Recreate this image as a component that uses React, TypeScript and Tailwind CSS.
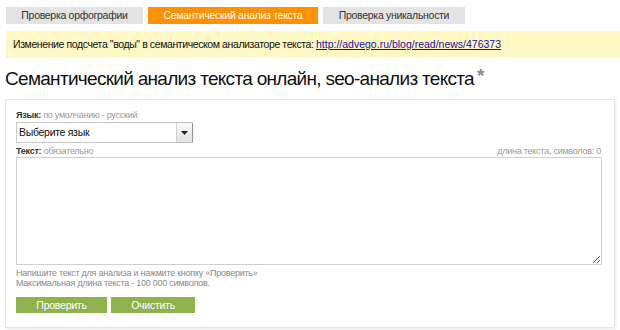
export default function App() {
  return (
    <div className="h-[330px] w-[620px] overflow-hidden bg-white font-['Liberation_Sans',Arial,sans-serif] text-[#222]">
      {/* tabs */}
      <div className="flex gap-[5px] pl-[6px] pt-[7px]">
        <div className="flex h-[17px] w-[137px] items-center justify-center bg-[#e3e3e3] text-[10.5px] tracking-[-0.3px] text-[#333]">
          Проверка орфографии
        </div>
        <div className="flex h-[17px] w-[170px] items-center justify-center bg-[#ff9000] text-[10.5px] tracking-[-0.3px] text-white">
          Семантический анализ текста
        </div>
        <div className="flex h-[17px] w-[142px] items-center justify-center bg-[#e3e3e3] text-[10.5px] tracking-[-0.3px] text-[#333]">
          Проверка уникальности
        </div>
      </div>

      {/* notice */}
      <div className="ml-[6px] mt-[7px] flex h-[27px] items-center bg-[#fdf7c3] pl-[7px] text-[10.5px] tracking-[-0.4px] text-[#111]">
        Изменение подсчета "воды" в семантическом анализаторе текста:&nbsp;
        <a href="#" className="tracking-[0px] text-[#1a0dab] underline">
          http://advego.ru/blog/read/news/476373
        </a>
      </div>

      {/* heading */}
      <h1 className="mt-[9px] flex items-start pl-[5px] text-[19px] leading-[24px] tracking-[-0.7px] text-[#111]">
        Семантический анализ текста онлайн, seo-анализ текста
        <span className="ml-[3px] mt-[-3px] text-[19px] font-bold tracking-normal text-[#8a8a8a]">*</span>
      </h1>

      {/* form panel */}
      <div className="ml-[5px] mt-[8px] h-[229px] w-[610px] border border-[#e4e4e4] shadow-[1px_1px_2px_rgba(0,0,0,0.08)]">
        <div className="px-[10px] pt-[9px] tracking-[-0.25px]">
          <div className="text-[9px] leading-[12px]">
            <span className="font-bold text-[#333]">Язык:</span>{" "}
            <span className="text-[#999]">по умолчанию - русский</span>
          </div>
          <div className="mt-[1px] flex h-[21px] w-[177px] items-center justify-between border border-[#c8c8c8] bg-white">
            <span className="pl-[2px] text-[10.5px] tracking-[-0.3px] text-[#111]">Выберите язык</span>
            <div className="flex h-full w-[16px] items-center justify-center border-l border-[#d0d0d0] bg-gradient-to-b from-[#fafafa] to-[#e2e2e2] shadow-[1px_0_1px_rgba(0,0,0,0.25)]">
              <svg width="7" height="4" viewBox="0 0 7 4">
                <path d="M0 0h7L3.5 4z" fill="#222" />
              </svg>
            </div>
          </div>
          <div className="mt-[2px] flex justify-between text-[9px] leading-[12px]">
            <div>
              <span className="font-bold text-[#333]">Текст:</span>{" "}
              <span className="text-[#999]">обязательно</span>
            </div>
            <span className="pr-[3px] text-[#999]">длина текста, символов: 0</span>
          </div>
          <textarea className="block h-[108px] w-[586px] resize-y border border-[#cfcfcf] bg-white outline-none" />
          <div className="mt-[3px] text-[9px] leading-[10px] text-[#888]">
            Напишите текст для анализа и нажмите кнопку «Проверить»
            <br />
            Максимальная длина текста - 100 000 символов.
          </div>
          <div className="mt-[9px] flex gap-[4px]">
            <button className="h-[16px] w-[91px] bg-[#8db24e] text-[10.5px] leading-[16px] text-white">
              Проверить
            </button>
            <button className="h-[16px] w-[84px] bg-[#8db24e] text-[10.5px] leading-[16px] text-white">
              Очистить
            </button>
          </div>
        </div>
      </div>
    </div>
  );
}
